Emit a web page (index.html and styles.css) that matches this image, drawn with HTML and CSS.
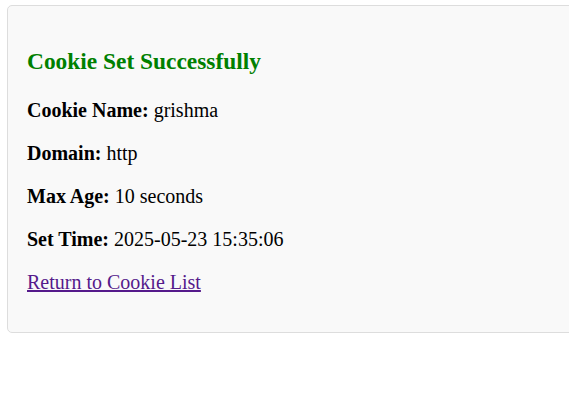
FILE: index.html
```html
<!DOCTYPE html>
<html>
<head>
<meta charset="utf-8">
<link rel="stylesheet" href="styles.css">
</head>
<body>
<div class="card">
  <h2 class="title">Cookie Set Successfully</h2>
  <p><strong>Cookie Name:</strong> grishma</p>
  <p><strong>Domain:</strong> http</p>
  <p><strong>Max Age:</strong> 10 seconds</p>
  <p><strong>Set Time:</strong> 2025-05-23 15:35:06</p>
  <p><a class="back" href="#">Return to Cookie List</a></p>
</div>
</body>
</html>
```
FILE: styles.css
```css
html, body {
  margin: 0;
  background: #fff;
}
body {
  padding: 5px 0 0 7px;
  font-family: "Liberation Serif", "Times New Roman", serif;
  font-size: 20px;
  color: #000;
  overflow: hidden;
}
.card {
  width: 600px;
  background: #f9f9f9;
  border: 1px solid #ddd;
  border-radius: 5px;
  padding: 20px 20px 18px 19px;
}
.title {
  color: green;
  font-size: 23.4px;
  margin: 22px 0 24px;
}
p {
  margin: 20px 0;
}
.back {
  color: #551a8b;
}
```
